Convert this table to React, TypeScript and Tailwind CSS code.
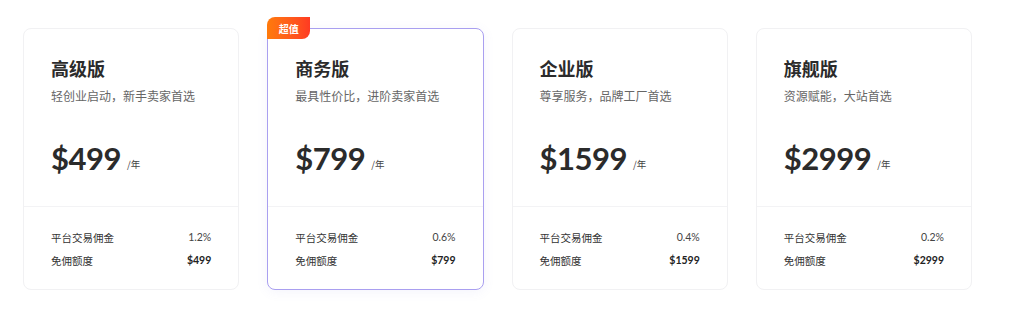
import React from "react";

const plans = [
  { name: "高级版", desc: "轻创业启动，新手卖家首选", price: "$499", rate: "1.2%", free: "$499", hot: false },
  { name: "商务版", desc: "最具性价比，进阶卖家首选", price: "$799", rate: "0.6%", free: "$799", hot: true },
  { name: "企业版", desc: "尊享服务，品牌工厂首选", price: "$1599", rate: "0.4%", free: "$1599", hot: false },
  { name: "旗舰版", desc: "资源赋能，大站首选", price: "$2999", rate: "0.2%", free: "$2999", hot: false },
];

const cjk = "font-['Noto_Sans_CJK_SC','Noto_Sans',sans-serif]";
const num = "font-['Lato','Noto_Sans_CJK_SC',sans-serif]";

export default function App() {
  return (
    <div className="w-[1024px] h-[317px] bg-white pt-[28px] pl-[23px]">
      <div className="grid grid-cols-4 gap-[28px] w-[949px]">
        {plans.map((p) => (
          <div
            key={p.name}
            className={`relative h-[262px] rounded-[8px] border bg-white ${
              p.hot ? "border-[#a99ff0] shadow-[0_2px_12px_rgba(120,110,220,0.08)]" : "border-[#f1f1f3]"
            }`}
          >
            {p.hot && (
              <div
                className={`absolute -top-[12px] -left-[1px] h-[22px] w-[43px] flex items-center justify-center rounded-tl-[8px] rounded-br-[8px] bg-gradient-to-r from-[#ff7a0a] to-[#ff3a22] text-white text-[10px] font-bold ${cjk}`}
              >
                超值
              </div>
            )}
            <div className="h-[178px] border-b border-[#f3f3f5] px-[27px] pt-[27px]">
              <div className={`text-[18px] leading-[24px] font-bold text-[#2b2b2b] ${cjk}`}>{p.name}</div>
              <div className={`mt-[7px] text-[12px] leading-[18px] text-[#666] ${cjk}`}>{p.desc}</div>
              <div className="mt-[33px] flex items-end">
                <span className={`text-[31px] leading-[40px] font-bold tracking-[-0.5px] text-[#2b2b2b] ${num}`}>{p.price}</span>
                <span className={`ml-[6px] mb-[8px] text-[9.5px] leading-[12px] text-[#444] ${cjk}`}>/年</span>
              </div>
            </div>
            <div className="px-[27px] pt-[22px] flex flex-col gap-[5px]">
              <div className="flex justify-between items-center h-[18px]">
                <span className={`text-[10.5px] text-[#333] ${cjk}`}>平台交易佣金</span>
                <span className={`text-[10.5px] text-[#444] ${num}`}>{p.rate}</span>
              </div>
              <div className="flex justify-between items-center h-[18px]">
                <span className={`text-[10.5px] text-[#333] ${cjk}`}>免佣额度</span>
                <span className={`text-[10.5px] font-bold text-[#222] ${num}`}>{p.free}</span>
              </div>
            </div>
          </div>
        ))}
      </div>
    </div>
  );
}
